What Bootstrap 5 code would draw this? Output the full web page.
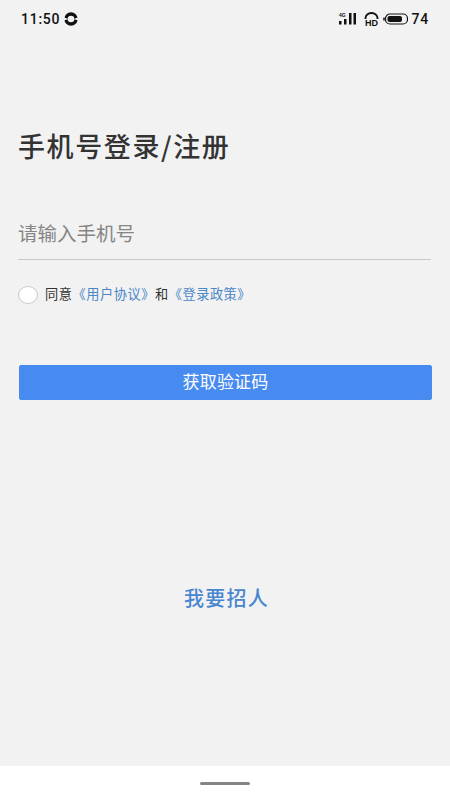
<!DOCTYPE html>
<html lang="zh-CN">
<head>
<meta charset="utf-8">
<link rel="stylesheet" href="https://cdn.jsdelivr.net/npm/bootstrap@5.3.0/dist/css/bootstrap.min.css">
<style>
html,body{height:800px;overflow:hidden}
body{background:#f2f2f2;font-family:"Liberation Sans","Noto Sans CJK SC",sans-serif;color:#222}
.shell{height:800px}
.status-row{height:38px;padding:0 21px 0 21px;color:#111;font-size:14px;font-family:"Roboto","Liberation Sans",sans-serif;font-weight:500;letter-spacing:.75px}
.main-area{padding:0 18px}
.login-title{margin:91px 0 0;height:34px;font-size:27px;line-height:34px;font-weight:500;font-family:"Noto Sans CJK SC",sans-serif;color:#333;letter-spacing:1.6px}
.phone-field{margin-top:50px;height:47px;border:0;border-bottom:1px solid #c9c9c9;border-radius:0;background:transparent;padding:0 0 7px 0;font-size:19.5px;font-family:"Noto Sans CJK SC",sans-serif;box-shadow:none;width:413px}
.phone-field::placeholder{color:#858585}
.phone-field:focus{background:transparent;box-shadow:none;border-color:#c9c9c9}
.agree-row{margin-top:24px;height:20px;font-size:13.2px;letter-spacing:.55px;font-family:"Noto Sans CJK SC",sans-serif;color:#333}
.round-check{width:20px;height:18px;border:1px solid #c8c8c8;border-radius:50%;background:#fff;margin:2px 7px 0 0;flex:none}
.agree-link{color:#4a86c8;text-decoration:none}
.code-btn{margin:61px 0 0 1px;width:413px;height:35px;padding:0 0 4px;background:#478bf0;border:1px solid #478bf0;border-radius:2px;color:#fff;font-size:17px;letter-spacing:.2px;font-family:"Noto Sans CJK SC",sans-serif;line-height:30px}
.hire-link{margin-top:185px;height:28px;font-size:20px;letter-spacing:1.300px;line-height:26px;font-family:"Noto Sans CJK SC",sans-serif;color:#4a86d0;text-decoration:none;font-weight:500;padding-left:3px}
.bottom-bar{height:34px;background:#fff}
.handle{width:50px;height:3px;background:#858585;border-radius:2px;margin-top:16px}
.tiny-g{font:700 5px "Liberation Sans",sans-serif;letter-spacing:0}
.tiny-hd{font:700 9px "Liberation Sans",sans-serif;letter-spacing:0}
</style>
</head>
<body>
<div class="shell d-flex flex-column">
  <div class="status-row d-flex align-items-center justify-content-between">
    <div class="d-flex align-items-center">
      <span>11:50</span>
      <svg width="14" height="14" viewBox="0 0 14 14" class="ms-1"><circle cx="7" cy="7" r="5" fill="none" stroke="#111" stroke-width="3.400"/><path d="M0 5.500L4.500 7 0 8.500ZM14 5.500L9.500 7 14 8.500ZM7 4.500L9.500 7 7 9.500 4.500 7Z" fill="#f2f2f2"/></svg>
    </div>
    <div class="d-flex align-items-center">
      <svg width="19" height="14" viewBox="0 0 19 14" fill="#111"><text class="tiny-g" x="2" y="5">4G</text><rect x="2" y="9" width="2.500" height="3.500"/><rect x="7" y="7" width="2.500" height="5.500"/><rect x="12" y="1" width="2.500" height="11.500"/><rect x="16.500" y="1" width="2.500" height="11.500"/></svg>
      <svg width="15" height="14" viewBox="0 0 15 14" class="ms-2" fill="none"><path d="M1.500 7V6a6 5 0 0 1 12 0v1" stroke="#111" stroke-width="1.800"/><text class="tiny-hd" x="1" y="13.500" fill="#111" textLength="13">HD</text></svg>
      <svg width="25" height="12" viewBox="0 0 25 12" class="ms-1"><path d="M1 4.500v3" stroke="#111" stroke-width="1.500"/><rect x="2.500" y="1" width="22" height="10" rx="4.500" fill="none" stroke="#111" stroke-width="1.200"/><rect x="4.500" y="3" width="14.500" height="6" rx="2" fill="#111"/></svg>
      <span class="ms-1">74</span>
    </div>
  </div>
  <div class="main-area flex-grow-1 d-flex flex-column">
    <h1 class="login-title">手机号登录/注册</h1>
    <input class="form-control phone-field" type="text" placeholder="请输入手机号">
    <div class="agree-row d-flex align-items-center">
      <span class="round-check"></span>
      <span>同意</span><a class="agree-link" href="#">《用户协议》</a><span>和</span><a class="agree-link" href="#">《登录政策》</a>
    </div>
    <button class="btn code-btn" type="button">获取验证码</button>
    <a class="hire-link text-center" href="#">我要招人</a>
  </div>
  <div class="bottom-bar d-flex justify-content-center"><div class="handle"></div></div>
</div>
<script src="https://cdn.jsdelivr.net/npm/bootstrap@5.3.0/dist/js/bootstrap.bundle.min.js"></script>
</body>
</html>
